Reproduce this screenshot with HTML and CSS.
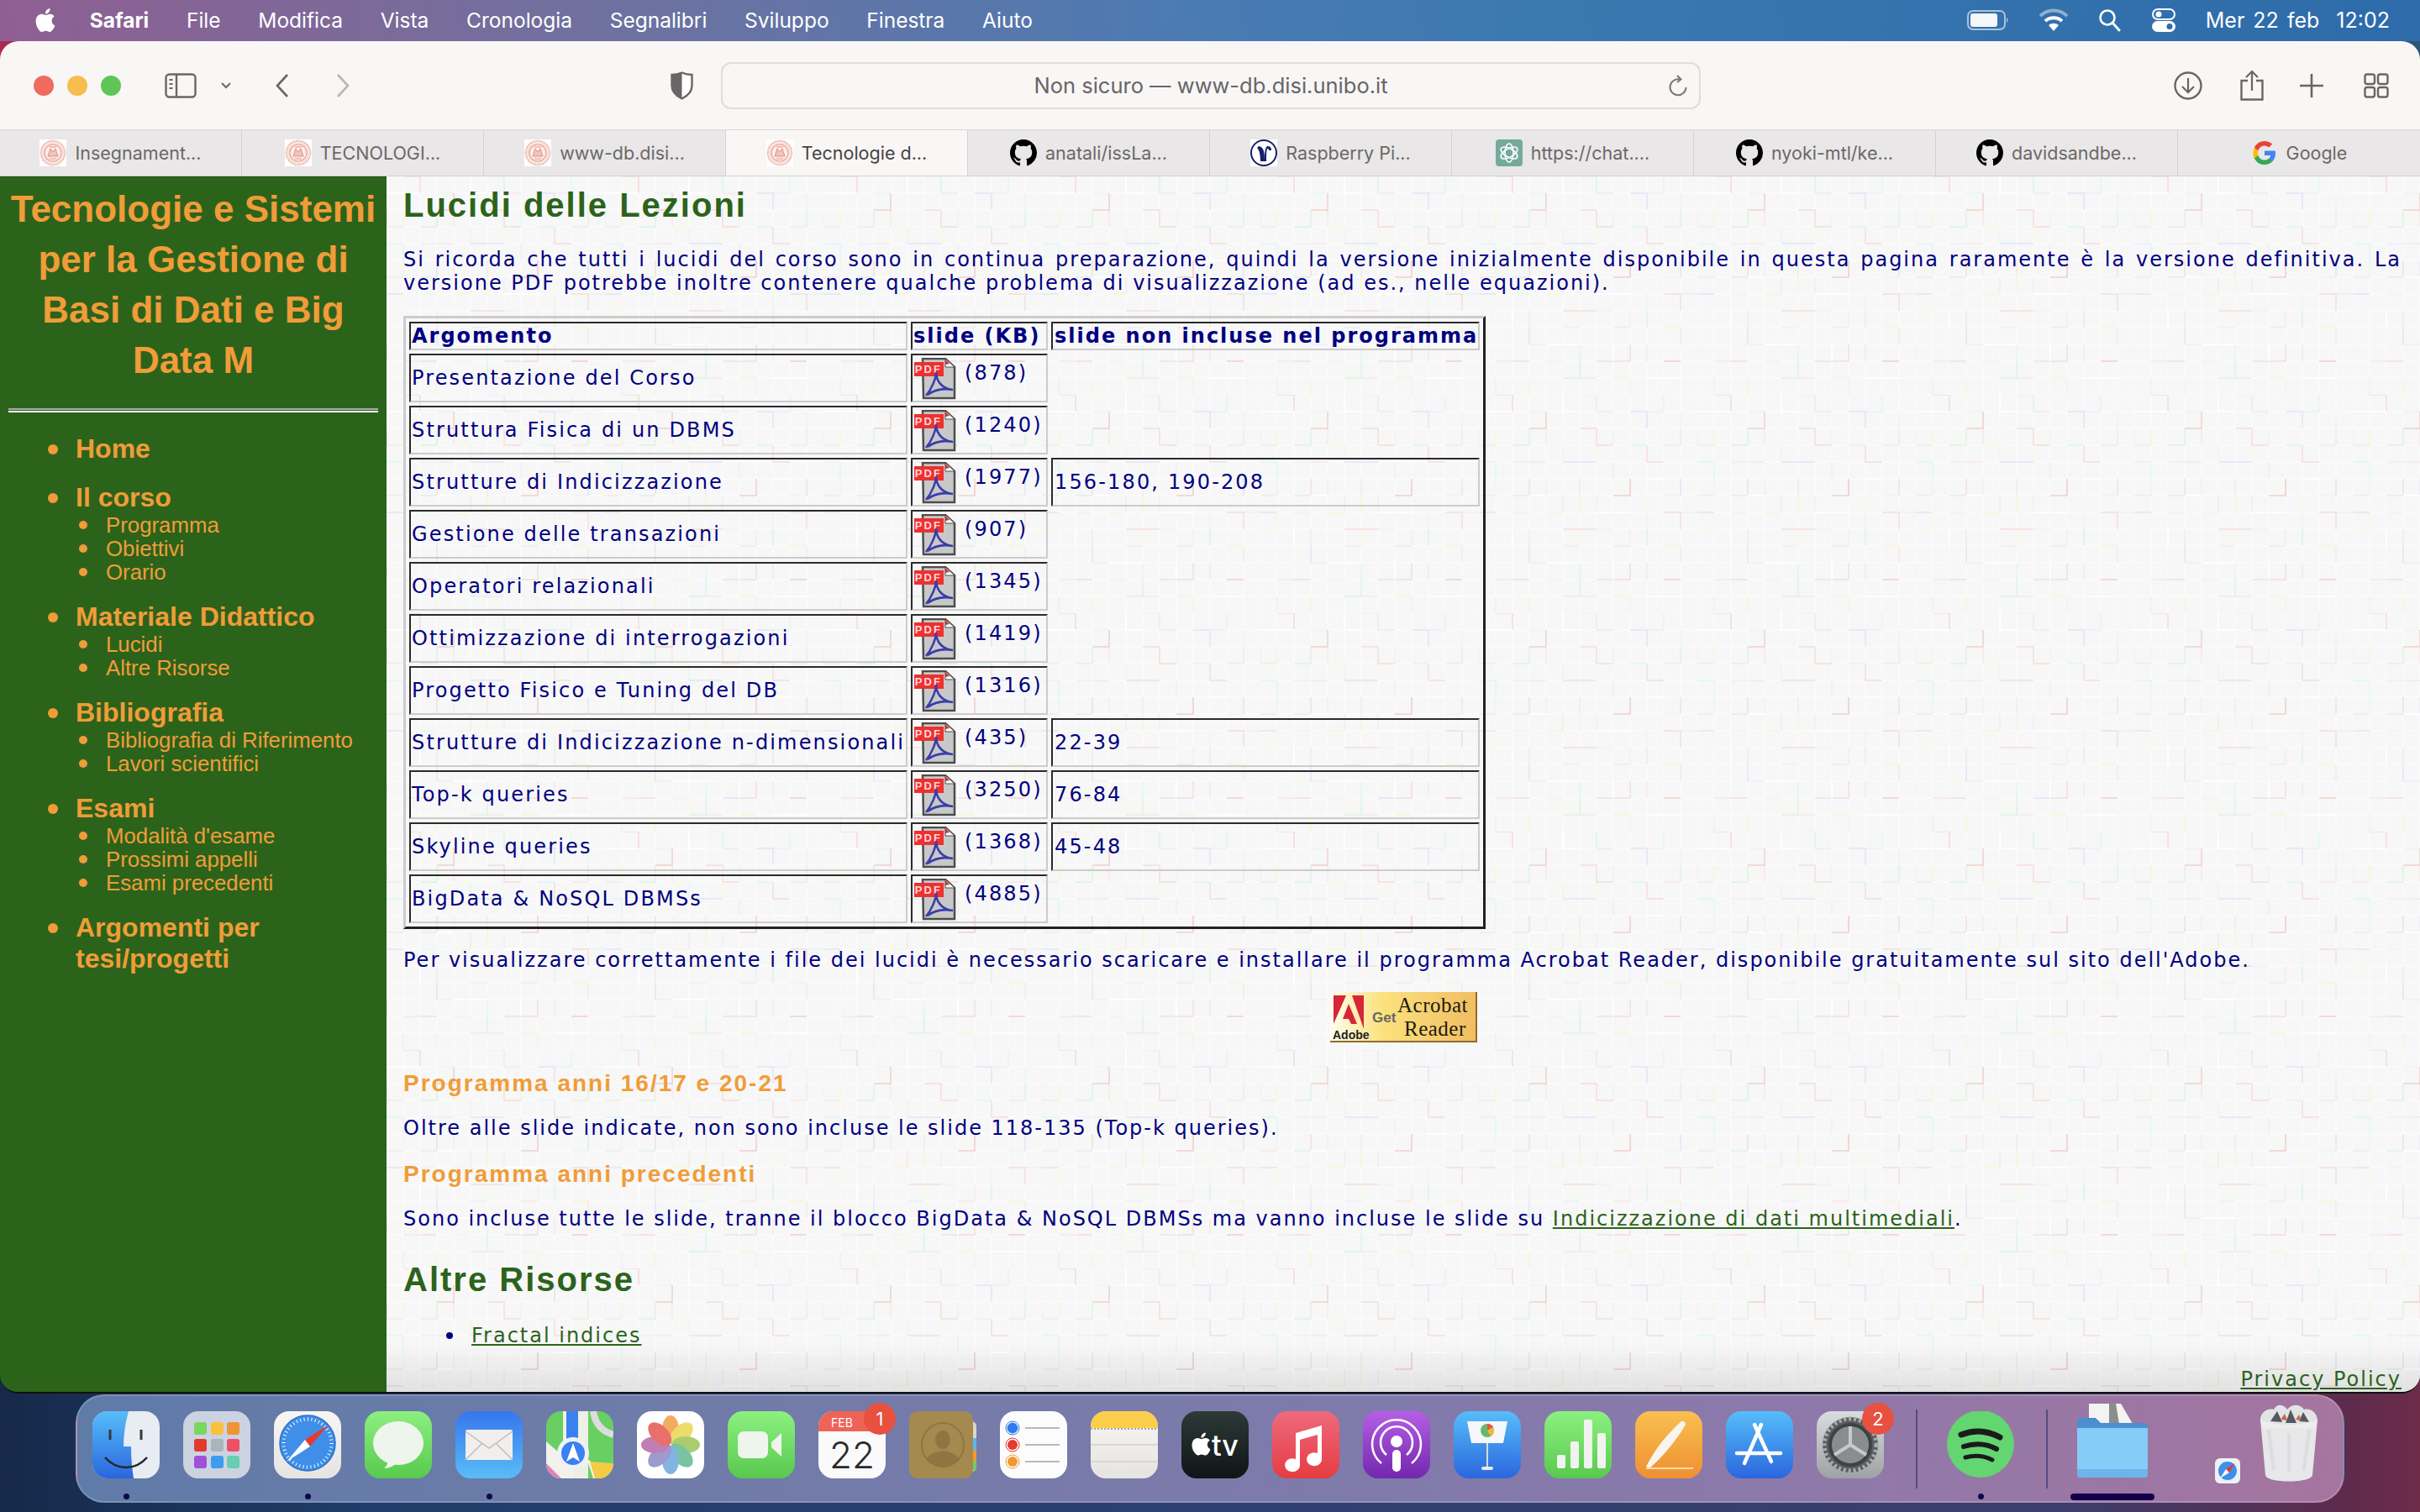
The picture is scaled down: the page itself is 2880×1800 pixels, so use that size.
FILE: index.html
```html
<!DOCTYPE html>
<html lang="it">
<head>
    <meta charset="UTF-8">
    <title>Tecnologie e Sistemi per la Gestione di Basi di Dati e Big Data M</title>
    <link rel="stylesheet" href="styles.css">
</head>
<body>

<svg class="defs" width="0" height="0">
    <defs>
        <symbol id="apple" viewBox="0 0 24 24"><path fill="currentColor" d="M12.152 6.896c-.948 0-2.415-1.078-3.96-1.04-2.04.027-3.91 1.183-4.961 3.014-2.117 3.675-.546 9.103 1.519 12.09 1.013 1.454 2.208 3.09 3.792 3.039 1.52-.065 2.09-.987 3.935-.987 1.831 0 2.35.987 3.96.948 1.637-.026 2.676-1.48 3.676-2.948 1.156-1.688 1.636-3.325 1.662-3.415-.039-.013-3.182-1.221-3.22-4.857-.026-3.04 2.48-4.494 2.597-4.559-1.429-2.09-3.623-2.324-4.39-2.376-2-.156-3.675 1.09-4.61 1.09zM15.53 3.83c.843-1.012 1.4-2.427 1.245-3.83-1.207.052-2.662.805-3.532 1.818-.78.896-1.454 2.338-1.273 3.714 1.338.104 2.715-.688 3.559-1.701"/></symbol>
        <symbol id="github" viewBox="0 0 16 16"><path fill="#000" d="M8 0C3.58 0 0 3.58 0 8c0 3.54 2.29 6.53 5.47 7.59.4.07.55-.17.55-.38 0-.19-.01-.82-.01-1.49-2.01.37-2.53-.49-2.69-.94-.09-.23-.48-.94-.82-1.13-.28-.15-.68-.52-.01-.53.63-.01 1.08.58 1.23.82.72 1.21 1.87.87 2.33.66.07-.52.28-.87.51-1.07-1.78-.2-3.64-.89-3.64-3.95 0-.87.31-1.59.82-2.15-.08-.2-.36-1.02.08-2.12 0 0 .67-.21 2.2.82.64-.18 1.32-.27 2-.27.68 0 1.36.09 2 .27 1.53-1.04 2.2-.82 2.2-.82.44 1.1.16 1.92.08 2.12.51.56.82 1.27.82 2.15 0 3.07-1.87 3.75-3.65 3.95.29.25.54.73.54 1.48 0 1.07-.01 1.93-.01 2.2 0 .21.15.46.55.38A8.013 8.013 0 0016 8c0-4.42-3.58-8-8-8z"/></symbol>
        <symbol id="unibo" viewBox="0 0 32 32">
            <rect width="32" height="32" fill="#fff"/>
            <circle cx="16" cy="16" r="14.5" fill="#f8e2dc" stroke="#e8a89c" stroke-width="1.5" stroke-dasharray="1.5 1"/>
            <circle cx="16" cy="16" r="10" fill="#fbeee9" stroke="#e8a094" stroke-width="1.2"/>
            <path d="M10 20l3-9 3 4 3-4 3 9zM12 9h8M12 23h8" fill="#f2c4ba" stroke="#e29084" stroke-width="1"/>
        </symbol>
        <symbol id="pdf" viewBox="0 0 50 50">
            <path d="M10 1h27l11 10v37H11z" fill="#c8c8c8" stroke="#4d4d4d" stroke-width="2.5"/>
            <path d="M37 1l11 10H37z" fill="#fff" stroke="#4d4d4d"/>
            <path d="M37 2l5 5-5 1z" fill="#c83434"/>
            <rect x="0" y="5" width="35" height="17" fill="#ee3030"/>
            <text x="17" y="18" class="pdf-label">PDF</text>
            <path d="M14 45C21 37 26 24 26 17c0 8 5 20 20 21-11-2-22 0-30 6" fill="none" stroke="#3a3ea8" stroke-width="2.6"/>
        </symbol>
        <linearGradient id="gBlue" x1="0" y1="0" x2="0" y2="1"><stop offset="0" stop-color="#3676ee"/><stop offset="1" stop-color="#5abcf7"/></linearGradient>
        <linearGradient id="gSky" x1="0" y1="0" x2="0" y2="1"><stop offset="0" stop-color="#56bdf9"/><stop offset="1" stop-color="#2a66de"/></linearGradient>
        <linearGradient id="gGreen" x1="0" y1="0" x2="0" y2="1"><stop offset="0" stop-color="#8cf07f"/><stop offset="1" stop-color="#58c94f"/></linearGradient>
        <linearGradient id="gRed" x1="0" y1="0" x2="0" y2="1"><stop offset="0" stop-color="#ee6a7c"/><stop offset="1" stop-color="#e63c42"/></linearGradient>
        <linearGradient id="gPurple" x1="0" y1="0" x2="0" y2="1"><stop offset="0" stop-color="#b65ee6"/><stop offset="1" stop-color="#7128ac"/></linearGradient>
        <linearGradient id="gOrange" x1="0" y1="0" x2="0" y2="1"><stop offset="0" stop-color="#f8c050"/><stop offset="1" stop-color="#ef8f32"/></linearGradient>
        <linearGradient id="gGrey" x1="0" y1="0" x2="0" y2="1"><stop offset="0" stop-color="#d8dde0"/><stop offset="1" stop-color="#9fa2a4"/></linearGradient>
        <linearGradient id="gDark" x1="0" y1="0" x2="0" y2="1"><stop offset="0" stop-color="#2c3a36"/><stop offset="1" stop-color="#101417"/></linearGradient>
        <linearGradient id="gPaper" x1="0" y1="0" x2="0" y2="1"><stop offset="0" stop-color="#f7f6f3"/><stop offset="1" stop-color="#e6e4e0"/></linearGradient>
        <linearGradient id="gBadge" x1="0" y1="0" x2="1" y2="0"><stop offset="0" stop-color="#fffdf0"/><stop offset=".35" stop-color="#fbe27e"/><stop offset="1" stop-color="#f2bd62"/></linearGradient>
        <pattern id="tile" width="260" height="260" patternUnits="userSpaceOnUse">
            <path d="M0 0H260M0 20H260M0 40H260M0 60H260M0 80H260M0 100H260M0 120H260M0 140H260M0 160H260M0 180H260M0 200H260M0 220H260M0 240H260M0 0V260M20 0V260M40 0V260M60 0V260M80 0V260M100 0V260M120 0V260M140 0V260M160 0V260M180 0V260M200 0V260M220 0V260M240 0V260" stroke="#fff" stroke-width="1.5" opacity=".55" fill="none"/>
            <g fill="none" stroke-width="1.5">
                <path d="M0 60h20M40 0v20M60 80h20M100 120v20M140 20h20M180 100v20M220 60h20M240 180v20M20 220h20M60 160v20M120 240h20M160 180h20M200 200v20M80 40v20M0 120h20M120 100v20" stroke="#f8e8e6"/>
                <path d="M20 100v20M60 20h20M100 60v20M140 160h20M180 240v20M220 120h20M40 140h20M0 200v20M80 220h20M160 40v20M240 20v20M200 140v20" stroke="#e8f8ec"/>
                <path d="M40 80h20M80 100v20M120 0h20M160 80v20M200 20h20M20 240v20M100 180h20M140 120v20M240 140h20M0 40v20M60 200h20M180 160v20" stroke="#ebeefb"/>
                <path d="M60 40h20M100 220v20M140 60v20M180 0h20M220 220h20M20 140v20M0 160h20M80 60h20M120 160v20M200 120v20M40 200h20" stroke="#f9f9e6"/>
                <path d="M20 0h20v20M120 40h20v20h20M60 100v20h-20M200 60v20h20M100 160h40M180 200v20h-20M40 220h20M220 140h20v20" stroke="#f4deda"/>
                <path d="M80 20v20h-20M160 120h20v-20M240 220h-20" stroke="#efcfce"/>
                <path d="M140 0v20M40 60h20v-20M200 160v20M100 240h20v-20M240 40v20" stroke="#dcf3e0"/>
                <path d="M0 140h20M100 80h40M60 180v20M180 20h20v20M140 220h20M240 100v20" stroke="#dfe5f7"/>
                <path d="M20 40v20M120 120v20M160 240h20M220 180h20M80 140h20M60 240v20" stroke="#f7f5d8"/>
                <path d="M40 120h20M180 60h20M0 80h20v20M120 200v20M220 0v20" stroke="#def6f5"/>
            </g>
            <path d="M100 0v20h20M0 20h40M140 140h40M200 100h20M40 160v20M80 200h40M200 240h40M60 120h20M160 200v20" stroke="#fff" stroke-width="2" fill="none"/>
        </pattern>
    </defs>
</svg>

<header class="menubar">
    <nav class="menubar-left">
        <svg class="apple-logo"><use href="#apple"/></svg>
        <b>Safari</b>
        <span>File</span>
        <span>Modifica</span>
        <span>Vista</span>
        <span>Cronologia</span>
        <span>Segnalibri</span>
        <span>Sviluppo</span>
        <span>Finestra</span>
        <span>Aiuto</span>
    </nav>
    <div class="menubar-right">
        <svg width="50" height="26" viewBox="0 0 50 26"><rect x="1" y="2" width="44" height="22" rx="6" fill="none" stroke="#a9c2dc" stroke-width="2"/><rect x="4" y="5" width="32" height="16" rx="3" fill="#f4f6fa"/><path d="M47 10c2 1 2 5 0 6z" fill="#a9c2dc"/></svg>
        <svg width="36" height="28" viewBox="0 0 36 28"><path d="M2 9a23 23 0 0 1 32 0" fill="none" stroke="#8eb0d2" stroke-width="4"/><path d="M8 15a15 15 0 0 1 20 0" fill="none" stroke="#fff" stroke-width="4"/><path d="M18 27l-6-7a9 9 0 0 1 12 0z" fill="#fff"/></svg>
        <svg width="28" height="28" viewBox="0 0 28 28"><circle cx="11" cy="11" r="8.5" fill="none" stroke="#fff" stroke-width="2.6"/><path d="M17 17l8 9" stroke="#fff" stroke-width="3" stroke-linecap="round"/></svg>
        <svg width="30" height="28" viewBox="0 0 30 28"><rect x="2" y="1" width="26" height="12" rx="6" fill="none" stroke="#fff" stroke-width="2"/><circle cx="9" cy="7" r="3.5" fill="#fff"/><rect x="1" y="15" width="28" height="13" rx="6.5" fill="#fff"/><circle cx="22" cy="21.5" r="3.5" fill="#2f6dab"/></svg>
        <span class="clock">Mer 22 feb &nbsp;12:02</span>
    </div>
</header>

<div class="window">
    <div class="toolbar">
        <div class="lights">
            <i class="light red"></i>
            <i class="light yellow"></i>
            <i class="light green"></i>
        </div>
        <svg class="tool sidebar-btn" width="38" height="30" viewBox="0 0 38 30"><rect x="1.5" y="1.5" width="35" height="27" rx="4" fill="none" stroke="#6a6666" stroke-width="2.4"/><path d="M14 1.5v27" stroke="#6a6666" stroke-width="2.4"/><path d="M5.500 8h4M5.500 13h4M5.500 18h4" stroke="#6a6666" stroke-width="2"/></svg>
        <svg class="tool caret" width="12" height="8" viewBox="0 0 12 8"><path d="M1 1l5 5 5-5" fill="none" stroke="#6a6666" stroke-width="2"/></svg>
        <svg class="tool back" width="18" height="30" viewBox="0 0 18 30"><path d="M15 2L3 15l12 13" fill="none" stroke="#6a6666" stroke-width="2.6"/></svg>
        <svg class="tool forward" width="18" height="30" viewBox="0 0 18 30"><path d="M3 2l12 13L3 28" fill="none" stroke="#b9b6b6" stroke-width="2.6"/></svg>
        <svg class="tool shield" width="27" height="34" viewBox="0 0 27 34"><path d="M13.500 1.500C17 3 21 4 25.500 4v13c0 7-5 12-12 15.500C6.500 29 1.500 24 1.500 17V4C6 4 10 3 13.500 1.500z" fill="#fff" stroke="#6a6666" stroke-width="2.4"/><path d="M13.500 1.500C10 3 6 4 1.500 4v13c0 7 5 12 12 15.500z" fill="#6a6666"/></svg>
        <div class="urlbar">
            <span>Non sicuro — www-db.disi.unibo.it</span>
            <svg class="reload" width="24" height="26" viewBox="0 0 24 26"><path d="M14 5.500A9.500 9.500 0 1 0 21.500 15" fill="none" stroke="#7a7676" stroke-width="2"/><path d="M11 1l4.500 4.500L11 9" fill="none" stroke="#7a7676" stroke-width="2"/></svg>
        </div>
        <svg class="tool download" width="34" height="34" viewBox="0 0 34 34"><circle cx="17" cy="17" r="15.500" fill="none" stroke="#6a6666" stroke-width="2.4"/><path d="M17 8v17M10 18l7 7 7-7" fill="none" stroke="#6a6666" stroke-width="2.2"/></svg>
        <svg class="tool share" width="30" height="38" viewBox="0 0 30 38"><path d="M10 13H2.500v22.500h25V13H20" fill="none" stroke="#6a6666" stroke-width="2.4"/><path d="M15 25V2M8 9l7-7 7 7" fill="none" stroke="#6a6666" stroke-width="2.2"/></svg>
        <svg class="tool plus" width="28" height="28" viewBox="0 0 28 28"><path d="M14 0v28M0 14h28" stroke="#6a6666" stroke-width="2.6"/></svg>
        <svg class="tool overview" width="30" height="30" viewBox="0 0 30 30"><g fill="none" stroke="#6a6666" stroke-width="2.400"><rect x="1.500" y="1.500" width="11.500" height="11.500" rx="2.500"/><rect x="17" y="1.500" width="11.500" height="11.500" rx="2.500"/><rect x="1.500" y="17" width="11.500" height="11.500" rx="2.500"/><rect x="17" y="17" width="11.500" height="11.500" rx="2.500"/></g></svg>
    </div>

    <div class="tabs">
        <div class="tab"><svg class="favicon"><use href="#unibo"/></svg>Insegnament...</div>
        <div class="tab"><svg class="favicon"><use href="#unibo"/></svg>TECNOLOGI...</div>
        <div class="tab"><svg class="favicon"><use href="#unibo"/></svg>www-db.disi...</div>
        <div class="tab active"><svg class="favicon"><use href="#unibo"/></svg>Tecnologie d...</div>
        <div class="tab"><svg class="favicon"><use href="#github"/></svg>anatali/issLa...</div>
        <div class="tab"><svg class="favicon" viewBox="0 0 32 32"><rect width="32" height="32" fill="#fff"/><circle cx="16" cy="16" r="15" fill="#fff" stroke="#14206a" stroke-width="2"/><path d="M10 8c5 1 7 4 7 18h-5c0-7-1-13-4-16zM20 8c4 0 5 2 5 5h-3c0-2-1-2-2-2-1 3-1 8-1 15h-2c0-9 0-15 3-18z" fill="#14206a"/></svg>Raspberry Pi...</div>
        <div class="tab"><svg class="favicon" viewBox="0 0 32 32"><rect width="32" height="32" rx="4" fill="#74aa9c"/><g fill="none" stroke="#fff" stroke-width="1.600"><ellipse cx="16" cy="16" rx="5" ry="11"/><ellipse cx="16" cy="16" rx="5" ry="11" transform="rotate(60 16 16)"/><ellipse cx="16" cy="16" rx="5" ry="11" transform="rotate(120 16 16)"/></g></svg>https://chat....</div>
        <div class="tab"><svg class="favicon"><use href="#github"/></svg>nyoki-mtl/ke...</div>
        <div class="tab"><svg class="favicon"><use href="#github"/></svg>davidsandbe...</div>
        <div class="tab"><svg class="favicon" viewBox="0 0 32 32"><path d="M29 16.400c0-1-.1-2-.3-2.900H16v5.500h7.300c-.3 1.700-1.300 3.200-2.700 4.100v3.400h4.400c2.600-2.400 4-5.900 4-10.100z" fill="#4285f4"/><path d="M16 30c3.700 0 6.700-1.200 9-3.400l-4.400-3.400c-1.200.8-2.800 1.300-4.600 1.300-3.500 0-6.500-2.400-7.600-5.600H3.900v3.500C6.100 26.900 10.700 30 16 30z" fill="#34a853"/><path d="M8.400 18.900c-.6-1.700-.6-3.500 0-5.200v-3.500H3.900c-1.900 3.800-1.900 8.400 0 12.200z" fill="#fbbc05"/><path d="M16 7.500c2 0 3.800.7 5.200 2l3.900-3.900C22.700 3.400 19.500 2 16 2 10.700 2 6.100 5.100 3.900 9.700l4.500 3.500C9.500 9.900 12.500 7.500 16 7.500z" fill="#ea4335"/></svg>Google</div>
    </div>

    <div class="page">
        <aside class="sidebar">
            <h1>Tecnologie e Sistemi per la Gestione di Basi di Dati e Big Data M</h1>
            <hr>
            <ul class="menu">
                <li>Home</li>
                <li>Il corso
                    <ul>
                        <li>Programma</li>
                        <li>Obiettivi</li>
                        <li>Orario</li>
                    </ul>
                </li>
                <li>Materiale Didattico
                    <ul>
                        <li>Lucidi</li>
                        <li>Altre Risorse</li>
                    </ul>
                </li>
                <li>Bibliografia
                    <ul>
                        <li>Bibliografia di Riferimento</li>
                        <li>Lavori scientifici</li>
                    </ul>
                </li>
                <li>Esami
                    <ul>
                        <li>Modalità d'esame</li>
                        <li>Prossimi appelli</li>
                        <li>Esami precedenti</li>
                    </ul>
                </li>
                <li>Argomenti per tesi/progetti</li>
            </ul>
        </aside>

        <main class="content">
            <svg class="texture" width="100%" height="100%"><rect width="100%" height="100%" fill="url(#tile)"/></svg>
            <div class="content-inner">
                <h2>Lucidi delle Lezioni</h2>
                <p class="intro">Si ricorda che tutti i lucidi del corso sono in continua preparazione, quindi la versione inizialmente disponibile in questa pagina raramente è la versione definitiva. La versione PDF potrebbe inoltre contenere qualche problema di visualizzazione (ad es., nelle equazioni).</p>

                <table class="slides">
                    <tr><th class="col-topic">Argomento</th><th class="col-size">slide (KB)</th><th class="col-skip">slide non incluse nel programma</th></tr>
                    <tr><td>Presentazione del Corso</td><td><div class="file"><svg class="pdf-icon"><use href="#pdf"/></svg><span>(878)</span></div></td><td></td></tr>
                    <tr><td>Struttura Fisica di un DBMS</td><td><div class="file"><svg class="pdf-icon"><use href="#pdf"/></svg><span>(1240)</span></div></td><td></td></tr>
                    <tr><td>Strutture di Indicizzazione</td><td><div class="file"><svg class="pdf-icon"><use href="#pdf"/></svg><span>(1977)</span></div></td><td>156-180, 190-208</td></tr>
                    <tr><td>Gestione delle transazioni</td><td><div class="file"><svg class="pdf-icon"><use href="#pdf"/></svg><span>(907)</span></div></td><td></td></tr>
                    <tr><td>Operatori relazionali</td><td><div class="file"><svg class="pdf-icon"><use href="#pdf"/></svg><span>(1345)</span></div></td><td></td></tr>
                    <tr><td>Ottimizzazione di interrogazioni</td><td><div class="file"><svg class="pdf-icon"><use href="#pdf"/></svg><span>(1419)</span></div></td><td></td></tr>
                    <tr><td>Progetto Fisico e Tuning del DB</td><td><div class="file"><svg class="pdf-icon"><use href="#pdf"/></svg><span>(1316)</span></div></td><td></td></tr>
                    <tr><td>Strutture di Indicizzazione n-dimensionali</td><td><div class="file"><svg class="pdf-icon"><use href="#pdf"/></svg><span>(435)</span></div></td><td>22-39</td></tr>
                    <tr><td>Top-k queries</td><td><div class="file"><svg class="pdf-icon"><use href="#pdf"/></svg><span>(3250)</span></div></td><td>76-84</td></tr>
                    <tr><td>Skyline queries</td><td><div class="file"><svg class="pdf-icon"><use href="#pdf"/></svg><span>(1368)</span></div></td><td>45-48</td></tr>
                    <tr><td>BigData &amp; NoSQL DBMSs</td><td><div class="file"><svg class="pdf-icon"><use href="#pdf"/></svg><span>(4885)</span></div></td><td></td></tr>
                </table>

                <p class="after-table">Per visualizzare correttamente i file dei lucidi è necessario scaricare e installare il programma Acrobat Reader, disponibile gratuitamente sul sito dell'Adobe.</p>

                <svg class="acrobat" width="175" height="62" viewBox="0 0 175 62">
                    <rect x="0" y="0" width="175" height="60" fill="url(#gBadge)"/>
                    <path d="M0 60h175V0l-2 0v58H0z" fill="#8f6d2a"/>
                    <path d="M4 4h15L4 38zM26 4h14v40zM22 14l10 24h-7l-3-6h-7z" fill="#d62638"/>
                    <text x="3" y="56" class="badge-adobe">Adobe</text>
                    <text x="50" y="36" class="badge-get">Get</text>
                    <text x="80" y="24" class="badge-title">Acrobat</text>
                    <text x="88" y="52" class="badge-title">Reader</text>
                </svg>

                <h3 class="first">Programma anni 16/17 e 20-21</h3>
                <p class="note">Oltre alle slide indicate, non sono incluse le slide 118-135 (Top-k queries).</p>
                <h3>Programma anni precedenti</h3>
                <p class="note">Sono incluse tutte le slide, tranne il blocco BigData &amp; NoSQL DBMSs ma vanno incluse le slide su <a href="#">Indicizzazione di dati multimediali</a>.</p>

                <h2 class="second">Altre Risorse</h2>
                <ul class="resources">
                    <li><a href="#">Fractal indices</a></li>
                </ul>
                <p class="privacy"><a href="#">Privacy Policy</a></p>
            </div>
        </main>
    </div>
</div>

<footer class="dock">
    <div class="app"><svg class="icon" viewBox="0 0 80 80"><rect width="80" height="80" rx="18" fill="#e8ecf3"/><path d="M18 0h25c-4 14-6 28-6 42h9c0 13 1 26 3 38H18A18 18 0 0 1 0 62V18A18 18 0 0 1 18 0z" fill="url(#gSky)"/><path d="M21 22v12M58 22v12" stroke="#33383f" stroke-width="3"/><path d="M15 55c14 16 36 16 50 0" fill="none" stroke="#22262c" stroke-width="2.600"/></svg><i class="dot"></i></div>
    <div class="app"><svg class="icon" viewBox="0 0 80 80"><rect width="80" height="80" rx="18" fill="#ccd3e0"/><rect x="13" y="13" width="15" height="15" rx="3" fill="#79d760"/><rect x="33" y="13" width="15" height="15" rx="3" fill="#f9c23c"/><rect x="52" y="13" width="15" height="15" rx="3" fill="#ee9535"/><rect x="13" y="33" width="15" height="15" rx="3" fill="#e2392f"/><rect x="33" y="33" width="15" height="15" rx="3" fill="#a9b5bc"/><rect x="52" y="33" width="15" height="15" rx="3" fill="#ef4f66"/><rect x="13" y="53" width="15" height="15" rx="3" fill="#a150d8"/><rect x="33" y="53" width="15" height="15" rx="3" fill="#3f9bf0"/><rect x="52" y="53" width="15" height="15" rx="3" fill="#67cfb0"/></svg></div>
    <div class="app"><svg class="icon" viewBox="0 0 80 80"><rect width="80" height="80" rx="18" fill="url(#gPaper)"/><circle cx="40" cy="38" r="33" fill="#3f8fe8" stroke="#2c6fd0" stroke-width="1.500"/><circle cx="40" cy="38" r="28.500" fill="none" stroke="#fff" stroke-width="4" stroke-dasharray="1 3.470"/><path d="M65 16L37 34l6 8z" fill="#e8392f"/><path d="M15 60l22-26 6 8z" fill="#fff"/></svg><i class="dot"></i></div>
    <div class="app"><svg class="icon" viewBox="0 0 80 80"><rect width="80" height="80" rx="18" fill="url(#gGreen)"/><ellipse cx="40" cy="38" rx="30" ry="26" fill="#eef5ec"/><path d="M28 58c-1 5-2 8-5 10 7 0 12-3 15-7z" fill="#eef5ec"/></svg></div>
    <div class="app"><svg class="icon" viewBox="0 0 80 80"><rect width="80" height="80" rx="18" fill="url(#gBlue)"/><rect x="12" y="22" width="56" height="36" rx="2" fill="#f0efee"/><path d="M12 24l28 20 28-20M12 58l20-20M68 58L48 38" fill="none" stroke="#bdbdbd" stroke-width="1.500"/></svg><i class="dot"></i></div>
    <div class="app"><svg class="icon" viewBox="0 0 80 80"><defs><clipPath id="mapsClip"><rect width="80" height="80" rx="18"/></clipPath></defs><g clip-path="url(#mapsClip)"><rect width="80" height="80" fill="#69cf63"/><path d="M0 36l32 28v16H0z" fill="#f3f1ec"/><path d="M0 62l18 18H0z" fill="#de82bc"/><path d="M48 56l32 24H56z" fill="#f6f4ee"/><path d="M52 60l28 2v18H58z" fill="#f3cb45"/><path d="M20 0h30v80H20z" fill="#f3f1ec" opacity=".95"/><path d="M24 0h14v40H24z" fill="#3a80f0"/><path d="M56 0c2 14 10 24 24 28" fill="none" stroke="#ddd" stroke-width="8"/><circle cx="32" cy="50" r="19" fill="#eef2f6"/><circle cx="32" cy="50" r="14" fill="#3a80f0"/><path d="M32 38l8 22-8-5-8 5z" fill="#fff"/></g></svg></div>
    <div class="app"><svg class="icon" viewBox="0 0 80 80"><rect width="80" height="80" rx="18" fill="#fff"/><g opacity=".82"><ellipse cx="40" cy="22" rx="10" ry="17" fill="#ee9a3c"/><ellipse cx="40" cy="22" rx="10" ry="17" fill="#e9d54a" transform="rotate(45 40 40)"/><ellipse cx="40" cy="22" rx="10" ry="17" fill="#98c24f" transform="rotate(90 40 40)"/><ellipse cx="40" cy="22" rx="10" ry="17" fill="#5bb78e" transform="rotate(135 40 40)"/><ellipse cx="40" cy="22" rx="10" ry="17" fill="#63a5da" transform="rotate(180 40 40)"/><ellipse cx="40" cy="22" rx="10" ry="17" fill="#8784c4" transform="rotate(225 40 40)"/><ellipse cx="40" cy="22" rx="10" ry="17" fill="#b462a4" transform="rotate(270 40 40)"/><ellipse cx="40" cy="22" rx="10" ry="17" fill="#e3504a" transform="rotate(315 40 40)"/></g></svg></div>
    <div class="app"><svg class="icon" viewBox="0 0 80 80"><rect width="80" height="80" rx="18" fill="url(#gGreen)"/><rect x="12" y="24" width="36" height="32" rx="7" fill="#eef5ec"/><path d="M52 37l12-11v28L52 43z" fill="#eef5ec"/></svg></div>
    <div class="app"><svg class="icon" viewBox="0 0 80 80"><rect width="80" height="80" rx="18" fill="#fafafa"/><path d="M0 24V18A18 18 0 0 1 18 0h44a18 18 0 0 1 18 18v6z" fill="#ee6358"/><text x="28" y="19" class="cal-month">FEB</text><text x="40" y="68" class="cal-day">22</text></svg><b class="badge">1</b></div>
    <div class="app"><svg class="icon" viewBox="0 0 80 80"><rect x="60" y="12" width="20" height="60" rx="6" fill="#ded7c8"/><rect x="70" y="32" width="10" height="14" fill="#58b8ef"/><rect x="70" y="46" width="10" height="14" fill="#f09a34"/><rect x="70" y="60" width="10" height="10" fill="#6ccf60"/><rect width="76" height="80" rx="10" fill="#a58a50"/><ellipse cx="40" cy="40" rx="25" ry="26" fill="none" stroke="#8f7540" stroke-width="2"/><ellipse cx="40" cy="34" rx="9" ry="11" fill="#8f7540"/><path d="M20 58c6-14 34-14 40 0-10 10-30 10-40 0z" fill="#8f7540"/></svg></div>
    <div class="app"><svg class="icon" viewBox="0 0 80 80"><rect width="80" height="80" rx="18" fill="#fcfcfc"/><circle cx="15" cy="20" r="6" fill="#2d7cf0" stroke="#2d7cf0"/><circle cx="15" cy="20" r="8" fill="none" stroke="#2d7cf0"/><circle cx="15" cy="40" r="6" fill="#e8392f"/><circle cx="15" cy="40" r="8" fill="none" stroke="#e8392f"/><circle cx="15" cy="60" r="6" fill="#ef9a2f"/><circle cx="15" cy="60" r="8" fill="none" stroke="#ef9a2f"/><path d="M30 20h41M30 40h41M30 60h41" stroke="#b9b9b9" stroke-width="2"/></svg></div>
    <div class="app"><svg class="icon" viewBox="0 0 80 80"><defs><clipPath id="notesClip"><rect width="80" height="80" rx="18"/></clipPath></defs><g clip-path="url(#notesClip)"><rect width="80" height="80" fill="url(#gPaper)"/><rect width="80" height="20" fill="#fbcf4c"/><path d="M0 21h80" stroke="#a7a49c" stroke-width="2" stroke-dasharray="2 2"/><path d="M0 40h80M0 60h80" stroke="#d1cfca" stroke-width="1.500"/></g></svg></div>
    <div class="app"><svg class="icon" viewBox="0 0 80 80"><rect width="80" height="80" rx="18" fill="url(#gDark)"/><use href="#apple" x="10" y="24" width="27" height="30" color="#fff"/><text x="36" y="53" class="tv-label">tv</text></svg></div>
    <div class="app"><svg class="icon" viewBox="0 0 80 80"><rect width="80" height="80" rx="18" fill="url(#gRed)"/><path d="M28 26l31-9v40a9 8 0 1 1-5-7V28l-21 6v30a9 8 0 1 1-5-7z" fill="#fff"/></svg></div>
    <div class="app"><svg class="icon" viewBox="0 0 80 80"><rect width="80" height="80" rx="18" fill="url(#gPurple)"/><g fill="none" stroke="#fff" stroke-width="2.600"><path d="M22 62a29 29 0 1 1 36 0"/><path d="M28 52a19 19 0 1 1 24 0"/></g><circle cx="40" cy="36" r="7" fill="#fff"/><rect x="35" y="46" width="10" height="26" rx="5" fill="#fff"/></svg></div>
    <div class="app"><svg class="icon" viewBox="0 0 80 80"><rect width="80" height="80" rx="18" fill="url(#gSky)"/><path d="M16 12h48l-5 26H21z" fill="#f5f7fa"/><circle cx="40" cy="23" r="8" fill="#64b870"/><path d="M40 23V15a8 8 0 0 1 7 4z" fill="#e9553f"/><path d="M40 23l7-4a8 8 0 0 1-3 11z" fill="#f1b73f"/><path d="M39 38h2v30h-2z" fill="#d8dbe0"/><rect x="33" y="66" width="14" height="4" rx="2" fill="#e8eaee"/></svg></div>
    <div class="app"><svg class="icon" viewBox="0 0 80 80"><rect width="80" height="80" rx="18" fill="url(#gGreen)"/><rect x="15" y="52" width="10" height="16" rx="2" fill="#f1f4ee"/><rect x="31" y="36" width="10" height="32" rx="2" fill="#f1f4ee"/><rect x="47" y="10" width="10" height="58" rx="2" fill="#f1f4ee"/><rect x="63" y="26" width="10" height="42" rx="2" fill="#f1f4ee"/></svg></div>
    <div class="app"><svg class="icon" viewBox="0 0 80 80"><rect width="80" height="80" rx="18" fill="url(#gOrange)"/><path d="M13 66c10-20 24-38 42-54 2-1 5 1 5 4C48 36 33 54 17 68z" fill="#f8f4ee"/><path d="M13 68h56" stroke="#f8dcb0" stroke-width="2"/></svg></div>
    <div class="app"><svg class="icon" viewBox="0 0 80 80"><rect width="80" height="80" rx="18" fill="url(#gSky)"/><g stroke="#fff" stroke-linecap="round" fill="none"><path d="M42 16L22 62M34 16l20 44" stroke-width="4.500"/><path d="M13 50h52" stroke-width="4.500"/></g></svg></div>
    <div class="app"><svg class="icon" viewBox="0 0 80 80"><rect width="80" height="80" rx="18" fill="url(#gGrey)"/><circle cx="40" cy="40" r="33" fill="#5b5e60"/><circle cx="40" cy="40" r="31" fill="none" stroke="#a9acae" stroke-width="5" stroke-dasharray="3 3"/><circle cx="40" cy="40" r="24" fill="#8a8d8f" stroke="#3f4244" stroke-width="4"/><path d="M40 40V18M40 40L21 52M40 40l19 12" stroke="#c7c9ca" stroke-width="4"/></svg><b class="badge">2</b></div>
    <i class="dock-sep"></i>
    <div class="app"><svg class="icon" viewBox="0 0 80 80"><circle cx="40" cy="39" r="40" fill="#63d571"/><g fill="none" stroke="#1b1b1b" stroke-linecap="round"><path d="M17 28c15-6 31-5 46 3" stroke-width="7"/><path d="M20 42c13-4 26-4 39 3" stroke-width="6"/><path d="M22 55c11-3 22-2 32 3" stroke-width="5"/></g></svg><i class="dot"></i></div>
    <i class="dock-sep last"></i>
    <div class="app stack"><svg class="icon wide" viewBox="0 0 84 88"><path d="M14 0h38l14 24H14z" fill="#f3f3f3"/><path d="M38 0h8l4 24H38z" fill="#8d8d8d"/><path d="M0 21a4 4 0 0 1 4-4h18l6 6h52a4 4 0 0 1 4 4v8H0z" fill="#4a8fd0"/><path d="M0 29h84v55a4 4 0 0 1-4 4H4a4 4 0 0 1-4-4z" fill="#86ccf8"/><path d="M0 78h84v6a4 4 0 0 1-4 4H4a4 4 0 0 1-4-4z" fill="#6cb4ea"/></svg><i class="bar"></i></div>
    <div class="mini-safari"><svg width="30" height="30" viewBox="0 0 30 30"><rect width="30" height="30" rx="6" fill="#eef1f4"/><circle cx="15" cy="15" r="11" fill="#3d90ea"/><path d="M24 6L13 13l4 4z" fill="#e8392f"/><path d="M6 24l7-11 4 4z" fill="#fff"/></svg></div>
    <div class="trash"><svg width="76" height="94" viewBox="0 0 76 94"><path d="M4 22C3 12 12 6 20 8c4-8 12-6 16 0 6-8 16-6 20 0 8-2 16 4 16 14l-4 8H8z" fill="#e2e3e5"/><path d="M16 22l8-12 6 13zM34 24l6-16 7 16zM50 22l5-11 7 12z" fill="#55585e"/><path d="M28 20l5-7 3 8zM46 20l4-6 3 7z" fill="#c96a4a"/><path d="M4 20c20 8 48 8 68 0l-6 66c-1 10-55 10-56 0z" fill="#eceded" opacity=".95"/><path d="M14 32l6 48M62 32l-6 48M38 36v46" stroke="#dcddde" stroke-width="4"/></svg></div>
</footer>

</body>
</html>
```

FILE: styles.css
```css
* {
    box-sizing: border-box;
}
body {
    margin: 0;
    width: 2880px;
    height: 1800px;
    overflow: hidden;
    display: flex;
    flex-direction: column;
    font-family: "Liberation Sans", Arial, sans-serif;
    background:
        linear-gradient(90deg, #a92c50 0 210px, #2a5874 210px) top / 100% 70px no-repeat,
        linear-gradient(90deg, #16294a 0, #1f3d68 15%, #2d4070 50%, #3b3e6c 85%, #5e2b4c 97%, #6e2b4a 100%);
}
.defs {
    position: absolute;
}

/* menu bar */
.menubar {
    height: 49px;
    flex: none;
    display: flex;
    justify-content: space-between;
    align-items: center;
    padding: 0 36px 2px 40px;
    color: #fff;
    font-family: Inter, "Liberation Sans", sans-serif;
    font-size: 24.5px;
    background: linear-gradient(90deg, #8f5f92 0, #6f719f 25%, #4a7bb3 50%, #3a78b0 65%, #2d6baa 100%);
}
.menubar-left {
    display: flex;
    align-items: center;
    gap: 44.7px;
}
.menubar-left b {
    font-weight: 700;
    margin-left: -6px;
}
.apple-logo {
    width: 28px;
    height: 32px;
    color: #fff;
}
.menubar-right {
    display: flex;
    align-items: center;
    gap: 35px;
}
.clock {
    font-size: 25px;
    word-spacing: 3px;
}

/* safari chrome */
.window {
    height: 1610px;
    flex: none;
    display: flex;
    flex-direction: column;
    overflow: hidden;
    border-radius: 22px;
    border-bottom: 2px solid #111;
}
.toolbar {
    height: 105px;
    flex: none;
    display: flex;
    align-items: center;
    background: #f9f6f6;
    padding-left: 40px;
}
.lights {
    display: flex;
    gap: 16px;
}
.light {
    width: 24px;
    height: 24px;
    border-radius: 50%;
}
.red { background: #ef6a5f; }
.yellow { background: #f6bd4f; }
.green { background: #5fc655; }
.tool {
    flex: none;
}
.sidebar-btn { margin-left: 52px; }
.caret { margin-left: 29px; }
.back { margin-left: 52px; }
.forward { margin-left: 54px; }
.shield { margin-left: 381px; }
.urlbar {
    width: 1166px;
    height: 56px;
    margin-left: 33px;
    position: relative;
    display: flex;
    align-items: center;
    justify-content: center;
    border: 2px solid #dfdcdc;
    border-radius: 12px;
    color: #666;
    font-family: Inter, "Liberation Sans", sans-serif;
    font-size: 25.5px;
}
.reload {
    position: absolute;
    right: 13px;
    top: 13px;
}
.download { margin-left: 563px; }
.share { margin-left: 44px; }
.plus { margin-left: 42px; }
.overview { margin-left: 48px; }

.tabs {
    height: 56px;
    flex: none;
    display: flex;
    border-top: 1px solid #d8d6d6;
    border-bottom: 1px solid #d4d2d2;
    background: #e9e7e7;
}
.tab {
    width: 288px;
    display: flex;
    align-items: center;
    justify-content: center;
    gap: 10px;
    border-right: 1px solid #d4d2d2;
    color: #6b6868;
    font-family: Inter, "Liberation Sans", sans-serif;
    font-size: 21.5px;
}
.tab:last-child {
    border-right: 0;
}
.tab.active {
    background: #f9f6f6;
    color: #444;
}
.favicon {
    width: 32px;
    height: 32px;
    flex: none;
}

/* page */
.page {
    flex: 1;
    display: flex;
    min-height: 0;
}
.sidebar {
    width: 460px;
    flex: none;
    background: #2c631b;
    color: #f09c38;
    padding: 8px 10px 0;
    border-top: 1px solid #1f4d12;
}
.sidebar h1 {
    margin: 0;
    font-size: 44px;
    line-height: 60px;
    text-align: center;
}
.sidebar hr {
    margin: 27px 0 0;
    height: 5px;
    border: 0;
    border-top: 2px solid #a8a8a8;
    border-bottom: 2px solid #fff;
}
.menu {
    list-style: none;
    margin: 25px 0 0;
    padding: 0 0 0 80px;
    font-size: 32px;
    font-weight: 700;
    line-height: 37px;
}
.menu li {
    position: relative;
}
.menu > li {
    margin-bottom: 21px;
}
.menu > li::before {
    content: "";
    position: absolute;
    left: -33px;
    top: 13px;
    width: 12px;
    height: 12px;
    border-radius: 50%;
    background: #f09c38;
}
.menu ul {
    list-style: none;
    margin: 0;
    padding-left: 36px;
    font-size: 25.8px;
    font-weight: 400;
    line-height: 28px;
}
.menu ul li::before {
    content: "";
    position: absolute;
    left: -32px;
    top: 9px;
    width: 10px;
    height: 10px;
    border-radius: 50%;
    background: #f09c38;
}

.content {
    flex: 1;
    position: relative;
    overflow: hidden;
    background: #f7f7f7;
    color: #000080;
    font-family: "DejaVu Sans", Verdana, sans-serif;
    font-size: 24px;
    line-height: 28px;
    letter-spacing: 2px;
}
.content::after {
    content: "";
    position: absolute;
    left: 0;
    right: 0;
    bottom: 0;
    height: 60px;
    background: linear-gradient(transparent, rgba(0, 0, 0, .09));
}
.texture {
    position: absolute;
    left: 0;
    top: 0;
}
.content-inner {
    position: relative;
    z-index: 1;
    padding: 11px 22px 0 20px;
}
.content h2 {
    margin: 0;
    color: #2c631b;
    font-family: "Liberation Sans", Arial, sans-serif;
    font-size: 40px;
    line-height: 46px;
    letter-spacing: 2px;
}
.content h3 {
    margin: 25px 0 0;
    color: #f09c38;
    font-family: "Liberation Sans", Arial, sans-serif;
    font-size: 28px;
    line-height: 32px;
    letter-spacing: 2px;
}
.content h3.first {
    margin-top: 31px;
}
.content h2.second {
    margin-top: 35px;
}
.intro {
    margin: 28px 0 25px;
    text-align: justify;
}
.after-table {
    margin: 23px 0 0;
}
.note {
    margin: 23px 0 0;
}
.acrobat {
    display: block;
    margin: 24px 0 0 1103px;
}
a {
    color: #2c631b;
}

.slides {
    table-layout: fixed;
    width: 1288px;
    border-spacing: 4px;
    border-width: 3px;
    border-style: solid;
    border-color: #ccc #222 #222 #ccc;
    empty-cells: hide;
}
.col-topic { width: 593px; }
.col-size { width: 163px; }
.slides th,
.slides td {
    border-width: 2px;
    border-style: solid;
    border-color: #2a2a2a #ccc #ccc #2a2a2a;
    padding: 1px 2px 1px 1px;
    text-align: left;
    white-space: nowrap;
    overflow: hidden;
    letter-spacing: 2.15px;
}
.slides td:last-child,
.slides th:last-child {
    padding-left: 2px;
}
.slides th {
    height: 34px;
    letter-spacing: 2px;
}
.slides td {
    height: 58px;
}
.file {
    display: flex;
    gap: 10px;
    align-items: flex-start;
    height: 52px;
}
.file span {
    margin-top: 6px;
}
.pdf-icon {
    width: 50px;
    height: 50px;
    flex: none;
    margin-top: 2px;
    margin-left: 1px;
}
.pdf-label {
    fill: #ffd8d8;
    font-family: "Liberation Sans", sans-serif;
    font-size: 13px;
    font-weight: 700;
    text-anchor: middle;
}

.resources {
    list-style: none;
    margin: 30px 0 0;
    padding: 0 0 0 81px;
}
.resources li {
    position: relative;
}
.resources li::before {
    content: "";
    position: absolute;
    left: -30px;
    top: 10px;
    width: 8px;
    height: 8px;
    border-radius: 50%;
    background: #000080;
}
.privacy {
    margin: 24px 0 0;
    text-align: right;
}

.badge-adobe {
    font-family: "Liberation Sans", sans-serif;
    font-size: 14px;
    font-weight: 700;
    letter-spacing: 0;
    fill: #222;
}
.badge-get {
    font-family: "Liberation Sans", sans-serif;
    font-size: 17px;
    font-weight: 700;
    letter-spacing: 0;
    fill: #666;
}
.badge-title {
    font-family: "Liberation Serif", serif;
    font-size: 25px;
    letter-spacing: .5px;
    fill: #1c1a10;
}

/* dock */
.dock {
    margin: 1px 0 0 90px;
    width: 2700px;
    height: 129px;
    flex: none;
    display: flex;
    padding: 18px 0 0 18px;
    border: 2px solid rgba(255, 255, 255, .18);
    border-radius: 34px;
    background: linear-gradient(90deg, #5f7ba8 0, #6f7ba8 25%, #7b7bab 50%, #8c79aa 75%, #a675a0 100%);
}
.app {
    width: 80px;
    margin-right: 28px;
    flex: none;
    position: relative;
}
.icon {
    display: block;
    width: 80px;
    height: 80px;
}
.dot {
    position: absolute;
    left: 37px;
    top: 98px;
    width: 7px;
    height: 7px;
    border-radius: 50%;
    background: #0a0a4a;
}
.badge {
    position: absolute;
    right: -12px;
    top: -10px;
    width: 38px;
    height: 38px;
    border-radius: 50%;
    background: #e8503f;
    color: #fff;
    font-family: Inter, "Liberation Sans", sans-serif;
    font-size: 22px;
    font-weight: 400;
    line-height: 38px;
    text-align: center;
}
.dock-sep {
    width: 2px;
    height: 94px;
    flex: none;
    margin: -2px 35px 0 10px;
    background: #5a4a80;
}
.dock-sep.last {
    margin-left: 10px;
}
.stack {
    width: 84px;
}
.icon.wide {
    width: 84px;
    height: 88px;
    margin-top: -9px;
}
.stack .bar {
    position: absolute;
    left: -8px;
    top: 98px;
    width: 100px;
    height: 8px;
    border-radius: 4px;
    background: #14004a;
}
.mini-safari {
    margin: 56px 0 0 52px;
    flex: none;
    height: 30px;
}
.trash {
    margin: -10px 0 0 20px;
    flex: none;
}
.cal-month {
    fill: #fff;
    font-family: Inter, "Liberation Sans", sans-serif;
    font-size: 14px;
    text-anchor: middle;
}
.cal-day {
    fill: #2a2a2a;
    font-family: Inter, "Liberation Sans", sans-serif;
    font-size: 44px;
    font-weight: 300;
    text-anchor: middle;
}
.tv-label {
    fill: #fff;
    font-family: Inter, "Liberation Sans", sans-serif;
    font-size: 34px;
    font-weight: 500;
}
```
